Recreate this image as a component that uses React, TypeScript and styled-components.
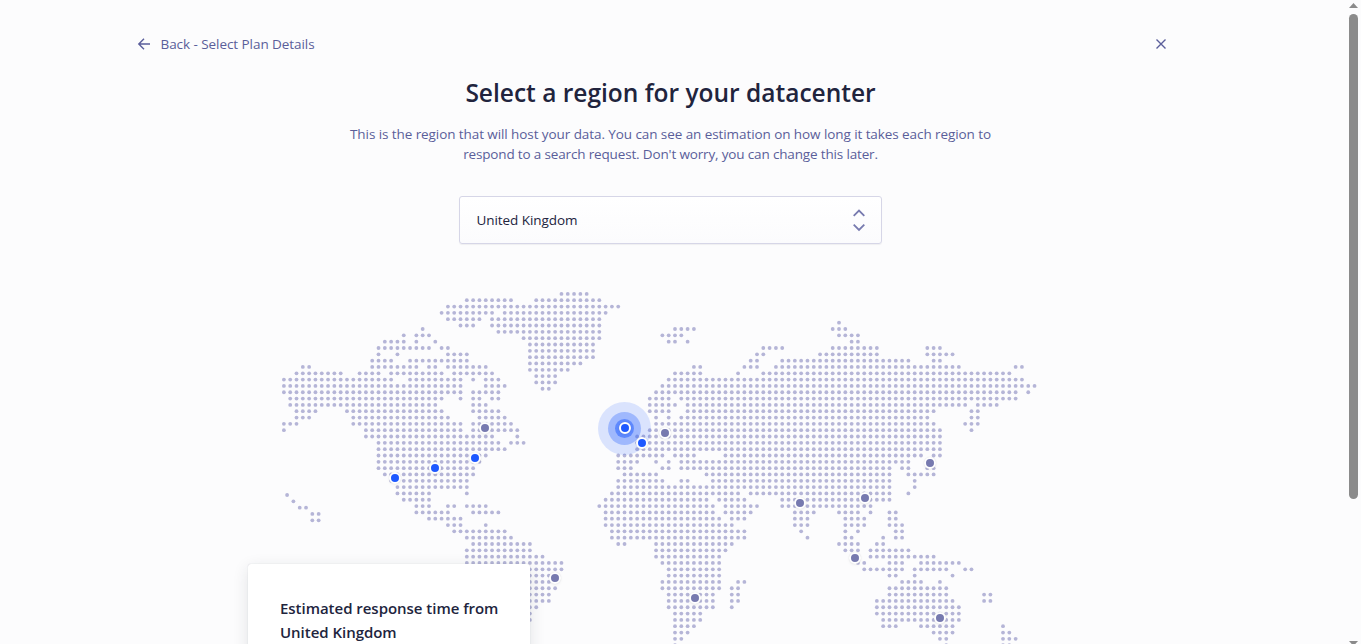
import React from "react";
import styled, { createGlobalStyle } from "styled-components";

const GlobalStyle = createGlobalStyle`
  * { box-sizing: border-box; }
  body {
    margin: 0;
    background: #fcfcfd;
    overflow: hidden;
    font-family: "Open Sans", "Noto Sans", sans-serif;
    color: #21243d;
  }
`;

const Page = styled.div`
  display: flex;
  height: 644px;
  overflow: hidden;
  background: #fcfcfd;
`;

const Main = styled.main`
  display: flex;
  flex-direction: column;
  align-items: center;
  width: 1341px;
  flex: none;
`;

const Header = styled.header`
  display: flex;
  align-items: center;
  justify-content: space-between;
  align-self: flex-start;
  width: 1033px;
  height: 20px;
  margin: 34px 0 0 136px;
`;

const BackLink = styled.a`
  display: flex;
  align-items: center;
  gap: 8.5px;
  color: #5a5e9a;
  font-size: 13.5px;
  line-height: 20px;
  letter-spacing: -0.06px;
  white-space: nowrap;
`;

const IconButton = styled.button`
  display: flex;
  padding: 0;
  border: 0;
  background: none;
`;

const Title = styled.h1`
  margin: 21px 0 0;
  font-size: 24.5px;
  font-weight: 600;
  line-height: 36px;
  white-space: nowrap;
`;

const Description = styled.p`
  display: flex;
  flex-direction: column;
  align-items: center;
  margin: 13px 0 0;
  color: #5a5e9a;
  font-size: 13.5px;
  line-height: 20px;
  white-space: nowrap;
`;

const DescriptionLine = styled.span<{ $tracking: number }>`
  letter-spacing: ${(p) => p.$tracking}px;
`;

const RegionSelect = styled.div`
  display: flex;
  align-items: center;
  justify-content: space-between;
  width: 423px;
  height: 48px;
  margin-top: 32px;
  padding: 0 16px 0 16.5px;
  border: 1px solid #d6d6e7;
  border-radius: 3px;
  background: linear-gradient(#ffffff, #fbfbfd);
  box-shadow: 0 1px 1px rgba(35, 38, 59, 0.06);
  font-size: 13.5px;
  letter-spacing: -0.07px;
`;

const MapCanvas = styled.section`
  position: relative;
  width: 845px;
  height: 360px;
  margin-top: 40px;
`;

const DotMap = styled.svg`
  display: block;
  fill: #b5b5d7;
`;

const Pin = styled.span<{ $x: number; $y: number; $active?: boolean }>`
  position: absolute;
  left: ${(p) => p.$x - 254}px;
  top: ${(p) => p.$y - 290}px;
  width: 12px;
  height: 12px;
  border: 2px solid #fff;
  border-radius: 50%;
  background: ${(p) => (p.$active ? "#1e59ff" : "#777aaf")};
  box-shadow: 0 0 1px rgba(35, 38, 59, 0.15), 0 1px 3px rgba(35, 38, 59, 0.06);
`;

const Halo = styled.span<{ $size: number }>`
  position: absolute;
  left: ${(p) => 376.8 - p.$size / 2}px;
  top: ${(p) => 144 - p.$size / 2}px;
  width: ${(p) => p.$size}px;
  height: ${(p) => p.$size}px;
  border-radius: 50%;
`;

const OuterHalo = styled(Halo)`
  background: rgba(30, 89, 255, 0.15);
`;
const MiddleHalo = styled(Halo)`
  background: rgba(30, 89, 255, 0.31);
`;
const InnerHalo = styled(Halo)`
  background: rgba(30, 89, 255, 0.5);
`;

const ResponseCard = styled.aside`
  position: absolute;
  left: 0;
  top: 280px;
  width: 282px;
  height: 180px;
  padding: 32px;
  border-radius: 3px;
  background: #fff;
  box-shadow: 0 0 1px rgba(35, 38, 59, 0.25), 0 4px 16px rgba(35, 38, 59, 0.12);
`;

const CardTitle = styled.h2`
  margin: 0;
  font-size: 15px;
  font-weight: 600;
  line-height: 24px;
  letter-spacing: -0.03px;
  white-space: nowrap;
`;

const Scrollbar = styled.div`
  display: flex;
  flex-direction: column;
  align-items: center;
  width: 11px;
  margin-left: 7px;
  padding-top: 3px;
`;

const ScrollThumb = styled.div`
  flex: none;
  width: 9px;
  height: 485px;
  margin: 6px 0 142px;
  border-radius: 5px;
  background: #8b8b8b;
`;

const ScrollArrow = styled.svg`
  display: block;
  flex: none;
  fill: #8b8b8b;
`;

const PITCH_X = 6.308;
const PITCH_Y = 6.323;

type DotGrid = { x: number; y: number; rows: string[] };

// Every row lists the filled columns, as single columns or inclusive ranges.
const GRIDS: DotGrid[] = [
  {
    x: 283.9,
    y: 293.9,
    rows: [
      "44-48",
      "29-36 40-50",
      "26-53",
      "25-33 35-51",
      "26-31 33-50",
      "28-30 33-50",
      "34-50",
      "38-50",
      "39-49",
      "39-49",
      "39-49",
      "39-47",
      "39-45",
      "40-43",
      "40-43",
      "41-42",
    ],
  },
  {
    x: 283.9,
    y: 322.7,
    rows: [
      "88",
      "22 62-65 87-89",
      "19 21-23 60-63 88-91",
      "16-19 21 24 61-62 64 90-91",
      "15-23 25-26 76-79 87-94 102-104",
      "15 18 26-29 75-76 85-94 102-106",
      "14-17 20-29 74-75 79-99 103-104",
      "3-4 14-21 23-24 26-32 65-66 73-75 78-107 116-117",
      "2-9 12-15 17-25 27-33 62-66 72 76-115",
      "0-17 20-28 30 32-34 61-117",
      "0-28 32-35 60-119",
      "0-28 30-34 59-116 118",
      "1-25 28 30-31 33-34 58-61 63-116",
      "1-24 30-32 58-62 64-108 110-113",
      "2-5 10-25 30-34 58-61 64-103 109-110",
      "2-4 11-26 31-35 59 61 63-102 109-110",
      "0-2 11-28 30-36 59-103 108-110",
      "0 13-28 30-37 58-104 109",
      "13-33 37 56-104",
      "15-34 36-38 56-104",
      "15-35 56-104",
      "15-32 53-60 62-65 70-101 103-104",
      "15-31 53-56 59 61 63-99",
      "15-30 53-55 60-61 63-96 98-99 102-103",
      "16-30 54-59 67-96 99-103",
      "17-29 53-60 63-64 68-96 100",
      "18-29 53-96 100",
      "18-23 29 52-72 74-96 99",
      "19-23 51-67 69-73 79-96",
      "21-23 26-27 29-32 50-68 70-75 79-93",
      "21-26 30-34 51-68 70-74 81-84 88-91 93 96-97",
      "23-28 51-69 71-73 81-83 89-92 96-97",
      "26-28 32 51-71 81-83 89-92 96-98",
      "27-35 52-73 82 89 91 97-98",
      "29-36 52-73 83 89-90 95 97-98",
      "30-39 53-54 59-71 88-91 94-95",
      "29-39 59-70 89-91 93-99",
      "29-41 59-69 93-103",
      "29-44 60-69 91-92 96-98 101-107",
      "29-44 61-69 92-98 100-105 108-109",
      "29-43 61-69 96-97 100 106",
      "29-42 60-69 72-73 98-101 104",
      "29-43 60-69 71-72 96-105",
      "29-42 61-68 71-72 96-105 111-112",
      "29-42 61-68 71-72 94-106 111-112",
      "29-40 61-68 71 94-107",
      "29-39 62-66 94-107",
      "29-39 62-66 95-107",
      "62-65 95-97 101-106 114",
      "62-64 103-106 114-115",
      "62-63 104-105 114-116",
      "62 105 114-115",
    ],
  },
  { x: 287.1, y: 495, rows: ["0", "1", "2-3", "4-5", "4-5"] },
];

const dots = GRIDS.flatMap((grid) =>
  grid.rows.flatMap((row, r) =>
    row.split(" ").flatMap((span) => {
      const [from, to = from] = span.split("-").map(Number);
      return Array.from({ length: to - from + 1 }, (_, i) => ({
        cx: grid.x + (from + i) * PITCH_X,
        cy: grid.y + r * PITCH_Y,
      }));
    })
  )
);

const PINS: { x: number; y: number; active?: boolean }[] = [
  { x: 395, y: 478, active: true },
  { x: 435, y: 468, active: true },
  { x: 475, y: 458, active: true },
  { x: 485, y: 428 },
  { x: 555, y: 578 },
  { x: 625, y: 428, active: true },
  { x: 642, y: 443, active: true },
  { x: 665, y: 433 },
  { x: 695, y: 598 },
  { x: 800, y: 503 },
  { x: 855, y: 558 },
  { x: 865, y: 498 },
  { x: 930, y: 463 },
  { x: 940, y: 618 },
];

export default function App() {
  return (
    <>
      <GlobalStyle />
      <Page>
        <Main>
          <Header>
            <BackLink>
              <svg width="16" height="16" fill="none" stroke="#5a5e9a" strokeWidth="1.4">
                <path d="M14 8H2.8M8 2.8 2.8 8 8 13.2" />
              </svg>
              Back - Select Plan Details
            </BackLink>
            <IconButton aria-label="Close">
              <svg width="16" height="16" fill="none" stroke="#5a5e9a" strokeWidth="1.4">
                <path d="M3.5 3.5l9 9M12.5 3.5l-9 9" />
              </svg>
            </IconButton>
          </Header>
          <Title>Select a region for your datacenter</Title>
          <Description>
            <DescriptionLine $tracking={-0.08}>
              This is the region that will host your data. You can see an estimation on how long it takes each region to
            </DescriptionLine>
            <DescriptionLine $tracking={-0.155}>
              respond to a search request. Don't worry, you can change this later.
            </DescriptionLine>
          </Description>
          <RegionSelect>
            United Kingdom
            <svg width="12" height="24" fill="none" stroke="#777aaf" strokeWidth="1.8">
              <path d="M.7 7.9 6 2.6l5.3 5.3M.7 16.6 6 21.9l5.3-5.3" />
            </svg>
          </RegionSelect>
          <MapCanvas>
            <DotMap width="845" height="360" viewBox="248 284 845 360">
              {dots.map((d, i) => (
                <circle key={i} cx={d.cx} cy={d.cy} r={1.9} />
              ))}
            </DotMap>
            <OuterHalo $size={53} />
            <MiddleHalo $size={33} />
            <InnerHalo $size={19} />
            {PINS.map((p) => (
              <Pin key={`${p.x}-${p.y}`} $x={p.x} $y={p.y} $active={p.active} />
            ))}
            <ResponseCard>
              <CardTitle>
                Estimated response time from
                <br />
                United Kingdom
              </CardTitle>
            </ResponseCard>
          </MapCanvas>
        </Main>
        <Scrollbar>
          <ScrollArrow width="9" height="5">
            <path d="M0 5 4.5 0 9 5z" />
          </ScrollArrow>
          <ScrollThumb />
          <ScrollArrow width="9" height="5">
            <path d="M0 0h9L4.5 5z" />
          </ScrollArrow>
        </Scrollbar>
      </Page>
    </>
  );
}
